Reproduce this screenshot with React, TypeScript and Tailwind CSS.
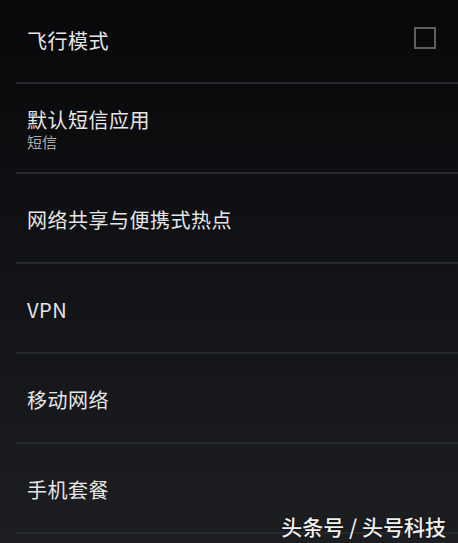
import React from "react"

const font = { fontFamily: '"Noto Sans CJK SC", "Noto Sans", sans-serif' }

type Row = { title: string; sub?: string; check?: boolean; h: string }

const rows: Row[] = [
    { title: "飞行模式", check: true, h: "h-[84px] pb-[4px]" },
    { title: "默认短信应用", sub: "短信", h: "h-[90px]" },
    { title: "网络共享与便携式热点", h: "h-[90px]" },
    { title: "VPN", h: "h-[90px]" },
    { title: "移动网络", h: "h-[90px]" },
    { title: "手机套餐", h: "h-[90px]" },
]

export default function App() {
    return (
        <div className="relative w-[458px] h-[543px] overflow-hidden bg-gradient-to-b from-[#08080a] to-[#1c1e22]" style={font}>
            {rows.map((r) => (
                <div key={r.title} className={`ml-4 border-b-2 border-[#26292d] pl-[11px] pr-[22px] flex items-center justify-between ${r.h}`}>
                    <div className="flex flex-col pt-[4px]">
                        <span className={`text-[20px] text-[#e6e6e6] tracking-[0.5px] ${r.sub ? "leading-[22px]" : "leading-[24px]"}`}>{r.title}</span>
                        {r.sub && <span className="mt-[2px] text-[15px] leading-[18px] text-[#ababab]">{r.sub}</span>}
                    </div>
                    {r.check && <div className="w-[22px] h-[22px] border-2 border-[#5e5e5e] -mt-[2px]" />}
                </div>
            ))}
            <div className="absolute right-[12px] bottom-[4px] text-[21px] leading-[26px] font-medium text-[#f0f0f0] [text-shadow:0_0_2px_rgba(0,0,0,0.8)]">
                头条号 / 头号科技
            </div>
        </div>
    )
}
